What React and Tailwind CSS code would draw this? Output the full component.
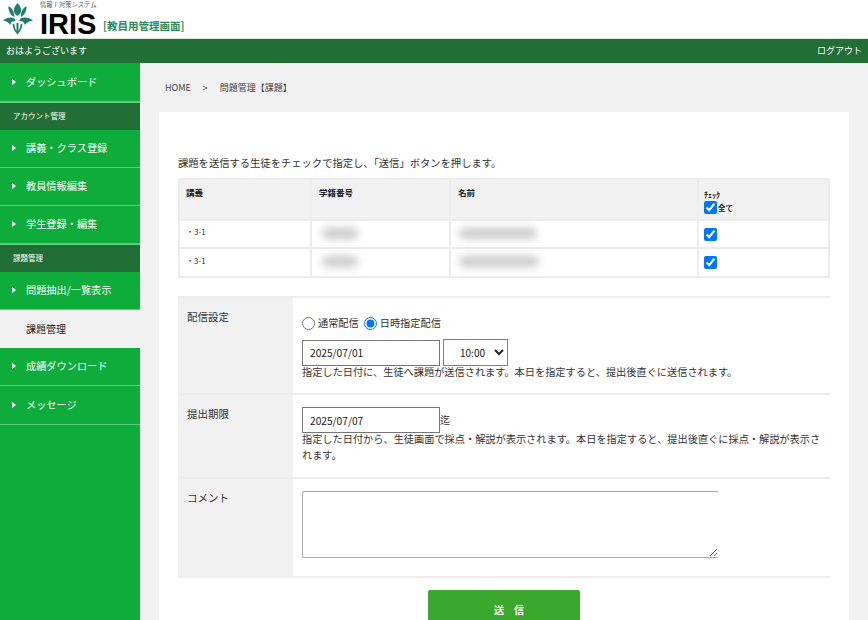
import React from "react";

const font = { fontFamily: '"Noto Sans CJK JP", "Noto Sans", sans-serif' };

const NavItem = ({ label }) => (
  <div className="flex items-center box-border h-[38px] pl-[12px] pb-[2px] bg-[#0dac3b] text-white text-[10.2px] border-b border-[#5ecb7d]">
    <span className="w-0 h-0 border-y-[3px] border-y-transparent border-l-[4px] border-l-white mr-[10px]"></span>
    {label}
  </div>
);

const NavHead = ({ label }) => (
  <div className="flex items-center box-border h-[28px] pl-[13px] pb-[2px] bg-[#216e36] text-white text-[7.5px] border-t border-[#5ecb7d]">
    {label}
  </div>
);

const Logo = () => (
  <svg width="36" height="36" viewBox="0 0 36 36" className="shrink-0">
    <g fill="#1f7f6d">
      <path d="M17.500 3c2.500 2.500 4 5.500 3.500 8.500-.4 2-1.500 3-3.500 4.500-2-1.500-3.100-2.500-3.500-4.500-.5-3 1-6 3.500-8.500z" />
      <path d="M8.500 6c3 1.500 5 4.500 5.500 8l.5 3c-3-1-6.500-5-6-11z" />
      <path d="M26.500 6c-3 1.500-5 4.500-5.500 8l-.5 3c3-1 6.500-5 6-11z" />
      <path d="M3 20.500c3-2.500 7-4 10.500-2.500 1.500.7 2 1.800 2 3-1.500.5-3 .3-4 1l-1.500 3c-1-2-3-3.800-7-4.500z" />
      <path d="M33 20.500c-3-2.500-8-4-11.500-2.500-1.500.7-2 1.800-2 3 1.500.5 3 .3 4 1l1.500 3c1-2 4-3.800 8-4.500z" />
      <path d="M12.500 23.500l2 1c.3 2.500 1 5 2 6.500v-8h2v8c1-1.500 1.700-4 2-6.500l2-1c-.3 4.500-2.200 8.500-5 11-2.800-2.500-4.700-6.500-5-11z" />
    </g>
  </svg>
);

const Blur = ({ w }) => (
  <div className="h-[11px] rounded-full bg-[#c9c9c9] blur-[4px]" style={{ width: w }}></div>
);

const Row = ({ no, name, tall }) => (
  <tr className={tall ? "h-[29px]" : "h-[28px]"}>
    <td className="border-2 border-[#ececec] pl-[6px] pb-[4px] text-[8px] text-[#333]">・3-1</td>
    <td className="border-2 border-[#ececec] pl-[10px] pb-[2px]"><Blur w={no} /></td>
    <td className="border-2 border-[#ececec] pl-[8px] pb-[2px]"><Blur w={name} /></td>
    <td className="border-2 border-[#ececec] pl-[5px]">
      <input type="checkbox" defaultChecked className="block w-[13px] h-[13px] m-0" />
    </td>
  </tr>
);

const FormRow = ({ label, height, children }) => (
  <div className="flex box-border border-b-2 border-[#ececec]" style={{ height }}>
    <div className="w-[115px] shrink-0 bg-[#f1f1f1] pl-[9px] pt-[11px] text-[10.5px] text-[#333]">{label}</div>
    <div className="flex-1 pl-[9px] text-[10.2px] text-[#333]">{children}</div>
  </div>
);

export default function App() {
  return (
    <div className="w-[868px] h-[620px] overflow-hidden bg-[#f1f1f1] flex flex-col" style={font}>
      <header className="h-[38px] bg-white flex items-start shrink-0">
        <Logo />
        <div className="ml-[4px] flex flex-col w-[58px]">
          <span className="h-[12px] text-[6.3px] leading-[10px] text-[#555] whitespace-nowrap">情報Ⅰ対策システム</span>
          <span className="text-[29px] leading-[24px] font-bold text-black" style={{ fontFamily: '"Liberation Sans", sans-serif' }}>IRIS</span>
        </div>
        <span className="ml-[5px] mt-[19px] text-[10.5px] leading-[14px] font-bold text-[#2f8a5b] whitespace-nowrap">[教員用管理画面]</span>
      </header>

      <div className="h-[25px] box-border bg-[#216e36] border-t border-[#d9e5dc] flex items-center justify-between px-[6px] text-white text-[9px] shrink-0">
        <span>おはようございます</span>
        <span>ログアウト</span>
      </div>

      <div className="flex flex-1 min-h-0">
        <aside className="w-[140px] shrink-0 bg-[#0dac3b] pt-[1px]">
          <NavItem label="ダッシュボード" />
          <NavHead label="アカウント管理" />
          <NavItem label="講義・クラス登録" />
          <NavItem label="教員情報編集" />
          <NavItem label="学生登録・編集" />
          <NavHead label="課題管理" />
          <NavItem label="問題抽出/一覧表示" />
          <div className="h-[38px] bg-[#f1f1f1] flex items-center pl-[26px] pb-[2px] text-[10px] text-[#222]">課題管理</div>
          <NavItem label="成績ダウンロード" />
          <div className="mt-[1px]">
            <NavItem label="メッセージ" />
          </div>
        </aside>

        <main className="flex-1 min-w-0 px-[19px]">
          <div className="h-[49px] flex items-center pl-[6px] text-[9px] text-[#444]">
            <span>HOME</span>
            <span className="mx-[12px]">&gt;</span>
            <span>問題管理【課題】</span>
          </div>

          <section className="bg-white h-[600px] px-[19px] pt-[44px]">
            <p className="text-[10.3px] leading-[14px] text-[#333] mb-[8px]">課題を送信する生徒をチェックで指定し、「送信」ボタンを押します。</p>

            <table className="w-[650px] table-fixed border-collapse">
              <colgroup>
                <col className="w-[132px]" />
                <col className="w-[139px]" />
                <col className="w-[248px]" />
                <col className="w-[131px]" />
              </colgroup>
              <thead>
                <tr className="h-[41px] bg-[#f1f1f1] text-[8.5px] text-[#222]">
                  <th className="border-2 border-[#ececec] align-top text-left pl-[6px] pt-[6px] font-bold">講義</th>
                  <th className="border-2 border-[#ececec] align-top text-left pl-[7px] pt-[6px] font-bold">学籍番号</th>
                  <th className="border-2 border-[#ececec] align-top text-left pl-[7px] pt-[6px] font-bold">名前</th>
                  <th className="border-2 border-[#ececec] align-top text-left pl-[5px] pt-[8px] font-bold">
                    <div className="text-[8px] leading-[13px]">ﾁｪｯｸ</div>
                    <label className="flex items-center text-[7.5px] leading-[13px]">
                      <input type="checkbox" defaultChecked className="w-[13px] h-[13px] m-0 mr-[1px]" />全て
                    </label>
                  </th>
                </tr>
              </thead>
              <tbody>
                <Row no={36} name={78} />
                <Row no={36} name={80} tall />
              </tbody>
            </table>

            <div className="mt-[18px] border-t-2 border-[#ececec]">
              <FormRow label="配信設定" height={97}>
                <div className="flex items-center box-border pt-[9px] h-[41px]">
                  <input type="radio" name="mode" className="w-[13px] h-[13px] m-0 mr-[3px]" />
                  <span className="mr-[5px]">通常配信</span>
                  <input type="radio" name="mode" defaultChecked className="w-[13px] h-[13px] m-0 mr-[3px]" />
                  <span>日時指定配信</span>
                </div>
                <div className="flex items-center gap-[3px]">
                  <input defaultValue="2025/07/01" className="w-[138px] h-[26px] border border-[#767676] px-[7px] text-[10.2px] text-[#222] outline-none" />
                  <select defaultValue="10:00" className="w-[65px] h-[27px] border border-[#808080] pl-[12px] text-[10px] text-[#222] bg-white">
                    <option>10:00</option>
                  </select>
                </div>
                <p className="leading-[14px] -mt-[1px]">指定した日付に、生徒へ課題が送信されます。本日を指定すると、提出後直ぐに送信されます。</p>
              </FormRow>
              <FormRow label="提出期限" height={84}>
                <div className="flex items-center pt-[12px]">
                  <input defaultValue="2025/07/07" className="w-[138px] h-[26px] border border-[#767676] px-[7px] text-[10.2px] text-[#222] outline-none" />
                  <span>迄</span>
                </div>
                <p className="leading-[16px] -mt-[2px]">指定した日付から、生徒画面で採点・解説が表示されます。本日を指定すると、提出後直ぐに採点・解説が表示されます。</p>
              </FormRow>
              <FormRow label="コメント" height={99}>
                <textarea className="block mt-[12px] w-[417px] h-[67px] rounded-[2px] border border-[#aaaaaa] border-r-transparent outline-none"></textarea>
              </FormRow>
            </div>

            <button className="block mx-auto mt-[12px] w-[152px] h-[44px] rounded-[2px] bg-[#3aa82c] pl-[10px] pb-[6px] text-white text-[10px] font-bold">送　信</button>
          </section>
        </main>
      </div>
    </div>
  );
}
